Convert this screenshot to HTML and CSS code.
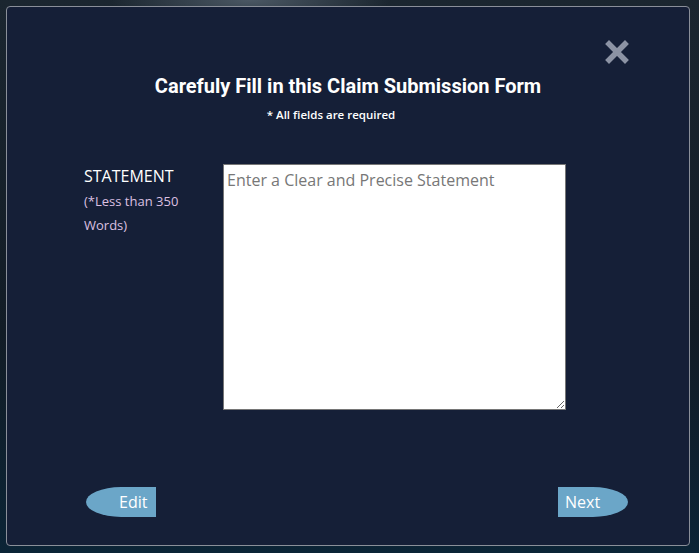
FILE: index.html
```html
<!DOCTYPE html>
<html>
<head>
<meta charset="utf-8">
<link rel="stylesheet" href="styles.css">
</head>
<body>
<div class="backdrop">
  <div class="modal">
    <button class="close" aria-label="Close">
      <svg width="24" height="24" viewBox="0 0 24 24"><path d="M4 4 L20 20 M20 4 L4 20" stroke="#8c93a4" stroke-width="5.5" stroke-linecap="square"/></svg>
    </button>
    <h1 class="title">Carefuly Fill in this Claim Submission Form</h1>
    <p class="required">* All fields are required</p>
    <div class="field">
      <div class="label">
        <div class="label-main">STATEMENT</div>
        <div class="label-note">(*Less than 350 Words)</div>
      </div>
      <textarea class="statement" placeholder="Enter a Clear and Precise Statement"></textarea>
    </div>
    <div class="actions">
      <button class="btn btn-edit">Edit</button>
      <button class="btn btn-next">Next</button>
    </div>
  </div>
</div>
</body>
</html>
```
FILE: styles.css
```css
html, body {
  margin: 0;
  padding: 0;
  height: 100%;
}
body {
  background: #0d1a24;
  font-family: "Open Sans", sans-serif;
}
.backdrop {
  height: 553px;
  box-sizing: border-box;
  padding: 6px 9px 7px 6px;
  background:
    radial-gradient(ellipse 140px 30px at 250px 0px, #4b5864 0%, rgba(75,88,100,0) 100%),
    linear-gradient(180deg, #1b2630 0%, #121c26 60%, #0b2436 100%);
}
.modal {
  position: relative;
  height: 540px;
  box-sizing: border-box;
  background: #151f37;
  border: 1px solid #8a8f99;
  border-radius: 4px;
  padding: 67px 0 0 77px;
}
.close {
  position: absolute;
  top: 33px;
  right: 60px;
  width: 24px;
  height: 24px;
  padding: 0;
  border: 0;
  background: none;
}
.close svg { display: block; }
.title {
  margin: 0 0 0 -77px;
  text-align: center;
  font-family: Roboto, sans-serif;
  font-weight: 700;
  font-size: 20px;
  line-height: 24px;
  color: #ffffff;
}
.required {
  margin: 9px 0 0 -111px;
  text-align: center;
  font-family: "Open Sans", sans-serif;
  font-weight: 600;
  font-size: 11.5px;
  line-height: 16px;
  color: #ffffff;
}
.field {
  display: flex;
  margin-top: 41px;
}
.label {
  width: 139px;
  flex: none;
}
.label-main {
  color: #ffffff;
  font-size: 16px;
  line-height: 24px;
}
.label-note {
  color: #dcc0e2;
  font-size: 13px;
  line-height: 24px;
  width: 100px;
  margin-top: 1px;
}
.statement {
  width: 343px;
  height: 246px;
  box-sizing: border-box;
  margin: 0;
  padding: 4px 3px 3px;
  border: 1px solid #767676;
  background: #ffffff;
  font-family: "Open Sans", sans-serif;
  font-size: 16px;
  line-height: 22px;
}
.statement::placeholder { color: #777777; }
.actions {
  display: flex;
  justify-content: space-between;
  width: 542px;
  margin: 77px 0 0 2px;
}
.btn {
  width: 70px;
  height: 30px;
  border: 0;
  padding: 0;
  background: #6ba6c8;
  color: #ffffff;
  font-family: "Open Sans", sans-serif;
  font-size: 16px;
}
.btn-edit {
  border-radius: 50% 0 0 50%;
  padding-left: 33px;
  text-align: left;
}
.btn-next {
  border-radius: 0 50% 50% 0;
  text-align: left;
  padding-left: 7px;
}
```
